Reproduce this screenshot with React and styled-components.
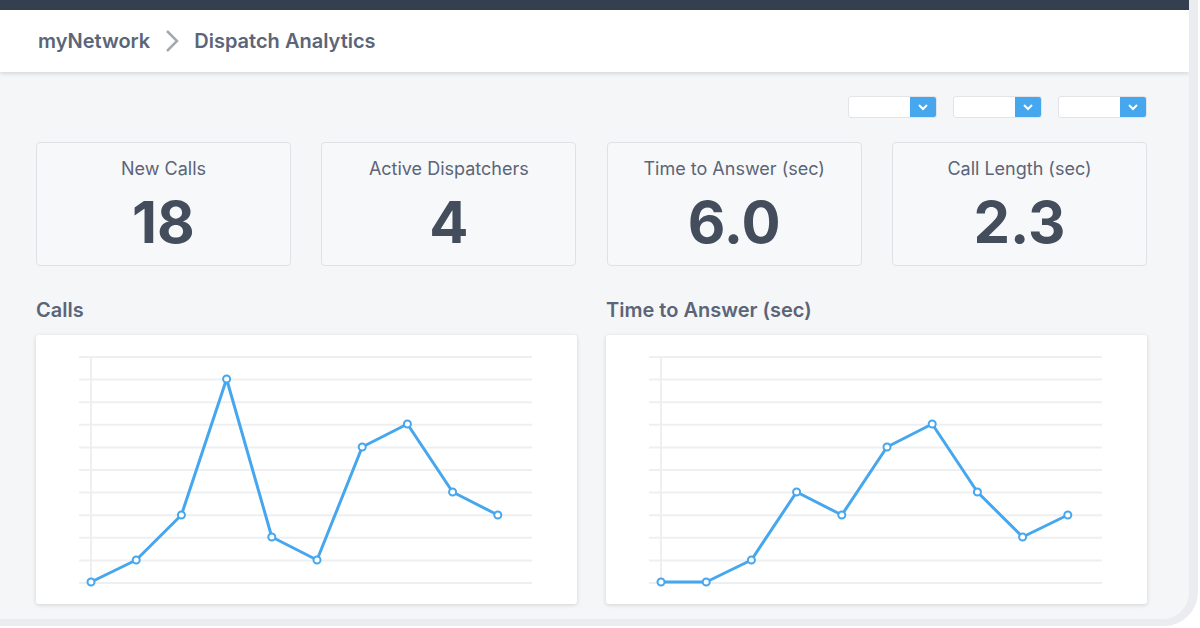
import React from "react";
import styled, { createGlobalStyle } from "styled-components";

const G = createGlobalStyle`
  html,body{margin:0;padding:0;background:#fff;font-family:Inter,"Noto Sans",sans-serif;}
`;
const Frame = styled.div`
  width:1198px;height:626px;box-sizing:border-box;background:#f5f6f8;
  border-right:9px solid #ebecef;border-bottom:7px solid #ebecef;border-bottom-right-radius:34px;overflow:hidden;
  display:flex;flex-direction:column;
`;
const TopBar = styled.div`height:10px;background:#343f50;flex:none;`;
const Header = styled.div`
  height:62px;background:#fff;flex:none;display:flex;align-items:center;gap:14px;padding-left:38px;
  box-shadow:0 2px 4px rgba(0,0,0,0.12);font-size:20px;font-weight:600;color:#5b6577;
`;
const Crumb = styled.span`color:#a4a9b1;font-weight:400;font-size:26px;display:flex;`;
const Content = styled.div`padding:24px 42px 0 36px;display:flex;flex-direction:column;`;
const Selects = styled.div`display:flex;justify-content:flex-end;gap:16px;`;
const Select = styled.div`
  width:89px;height:22px;box-sizing:border-box;border:1px solid #e2e4e8;border-radius:3px;background:#fff;display:flex;justify-content:flex-end;overflow:hidden;
`;
const Caret = styled.div`width:26px;background:#46a6ee;display:flex;align-items:center;justify-content:center;`;
const Stats = styled.div`display:grid;grid-template-columns:repeat(4,255px);justify-content:space-between;margin-top:24px;`;
const Stat = styled.div`
  height:124px;box-sizing:border-box;border:1.5px solid #dfe1e5;border-radius:4px;background:#f7f8fa;
  display:flex;flex-direction:column;align-items:center;padding-top:15px;
`;
const Label = styled.div`font-size:18px;color:#5b6577;`;
const Value = styled.div`font-size:58px;font-weight:700;color:#434d5c;line-height:1;margin-top:14px;`;
const Charts = styled.div`display:grid;grid-template-columns:541px 541px;justify-content:space-between;margin-top:32px;`;
const Title = styled.div`font-size:20px;font-weight:600;color:#5b6577;margin-bottom:13px;`;
const Card = styled.div`height:269px;background:#fff;border-radius:3px;box-shadow:0 1px 4px rgba(0,0,0,0.15);`;

function Chart({ ys }) {
  const pts = ys.map((y, i) => [55 + 45.2 * i, y - 337]);
  return (
    <svg width="541" height="269">
      {Array.from({ length: 11 }, (_, i) => (
        <line key={i} x1="43" x2="496" y1={22 + 22.6 * i} y2={22 + 22.6 * i} stroke="#eeeff1" strokeWidth="2" />
      ))}
      <line x1="55" x2="55" y1="21" y2="249" stroke="#eeeff1" strokeWidth="2" />
      <polyline points={pts.map(p => p.join(",")).join(" ")} fill="none" stroke="#46a6ee" strokeWidth="3" strokeLinejoin="round" />
      {pts.map((p, i) => <circle key={i} cx={p[0]} cy={p[1]} r="3.5" fill="#fff" stroke="#46a6ee" strokeWidth="2" />)}
    </svg>
  );
}

const stats = [["New Calls", "18"], ["Active Dispatchers", "4"], ["Time to Answer (sec)", "6.0"], ["Call Length (sec)", "2.3"]];

export default function App() {
  return (
    <Frame>
      <G />
      <TopBar />
      <Header>
        myNetwork
        <Crumb><svg width="16" height="24" viewBox="0 0 16 24"><path d="M3 2l10 10-10 10" fill="none" stroke="#a4a9b1" strokeWidth="2.5" /></svg></Crumb>
        Dispatch Analytics
      </Header>
      <Content>
        <Selects>
          {[0, 1, 2].map(i => (
            <Select key={i}><Caret><svg width="12" height="8" viewBox="0 0 12 8"><path d="M2 2l4 4 4-4" fill="none" stroke="#fff" strokeWidth="2" /></svg></Caret></Select>
          ))}
        </Selects>
        <Stats>
          {stats.map(([l, v]) => <Stat key={l}><Label>{l}</Label><Value>{v}</Value></Stat>)}
        </Stats>
        <Charts>
          <div><Title>Calls</Title><Card><Chart ys={[584, 562, 517, 381, 539, 562, 449, 426, 494, 517]} /></Card></div>
          <div><Title>Time to Answer (sec)</Title><Card><Chart ys={[584, 584, 562, 494, 517, 449, 426, 494, 539, 517]} /></Card></div>
        </Charts>
      </Content>
    </Frame>
  );
}
